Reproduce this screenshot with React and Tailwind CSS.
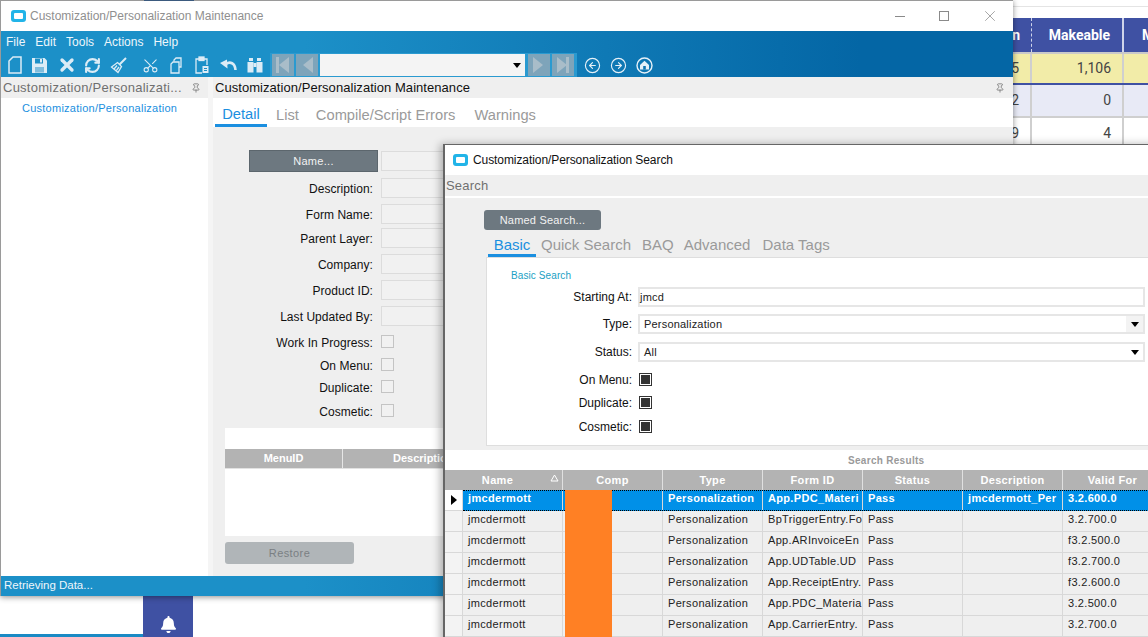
import React from "react";
import { X, RefreshCw, Scissors, CircleArrowLeft, CircleArrowRight, Pin } from "lucide-react";
import { FaBell } from "react-icons/fa";

const AppIcon = () => (
  <div className="w-[15px] h-[12px] rounded-[3px] bg-[#22b4e8] flex items-center justify-center shrink-0">
    <div className="w-[9px] h-[6px] rounded-[1px] bg-white" />
  </div>
);

const NewIcon = () => (
  <svg width="14" height="18" viewBox="0 0 14 18" fill="none" stroke="#dcecf6" strokeWidth="1.5">
    <path d="M5 1h8v16H1V5z" />
  </svg>
);

const SaveIcon = () => (
  <svg width="17" height="17" viewBox="0 0 17 17" fill="#dcecf6">
    <path d="M1 1h12.5L16 3.5V16H1z" />
    <rect x="4" y="1.5" width="8" height="5" fill="#1c8fc7" />
    <rect x="9" y="2" width="2" height="3.5" fill="#dcecf6" />
    <rect x="4" y="10" width="9" height="5.5" fill="#7fbddd" />
  </svg>
);

const BroomIcon = () => (
  <svg width="17" height="17" viewBox="0 0 17 17" fill="none" stroke="#dcecf6" strokeWidth="1.3">
    <path d="M16 1 9.5 7.5" strokeWidth="2" />
    <path d="M7.5 5.5 11.5 9.5 8 15.5 1.5 10z" />
    <path d="M4 12 7 8.5M6.3 13.7 9 10" />
  </svg>
);

const CopyIcon = () => (
  <svg width="14" height="17" viewBox="0 0 14 17" fill="none" stroke="#dcecf6" strokeWidth="1.3">
    <path d="M4 4.5V3l2-2h5v9h-2" />
    <path d="M3 5h6v11H1V7z" />
  </svg>
);

const PasteIcon = () => (
  <svg width="14" height="18" viewBox="0 0 14 18" fill="none" stroke="#dcecf6" strokeWidth="1.3">
    <path d="M4 3H1v14h6" />
    <path d="M9 3h3v6" />
    <rect x="4" y="1" width="5" height="3.5" fill="#dcecf6" />
    <rect x="7.5" y="10" width="6" height="7" fill="#dcecf6" stroke="none" />
    <path d="M9 12.5h3M9 14.5h3" stroke="#1c8fc7" strokeWidth="1" />
  </svg>
);

const UndoIcon = () => (
  <svg width="17" height="13" viewBox="0 0 17 13" fill="none">
    <path d="M6 5c4-3 9-1 9.5 6" stroke="#dcecf6" strokeWidth="2.6" />
    <path d="M0 4l7-3.5.5 9z" fill="#dcecf6" />
  </svg>
);

const BinocularsIcon = () => (
  <svg width="16" height="16" viewBox="0 0 16 16" fill="#dcecf6">
    <rect x="2" y="1" width="4" height="3" />
    <rect x="10" y="1" width="4" height="3" />
    <rect x="0.5" y="5" width="6" height="10.5" />
    <rect x="9.5" y="5" width="6" height="10.5" />
    <rect x="6.5" y="6" width="3" height="4" />
  </svg>
);

const HomeCircle = () => (
  <svg width="17" height="17" viewBox="0 0 17 17" fill="none">
    <circle cx="8.5" cy="8.5" r="7.5" stroke="#e6f1f8" strokeWidth="1.4" />
    <path d="M8.5 3.8 13 8v4.6H4V8z" fill="#e6f1f8" />
    <rect x="7.2" y="9" width="2.6" height="3.6" fill="#0e74b1" />
  </svg>
);

const SkipGlyph = ({ dir, bar }) => (
  <svg width="14" height="16" viewBox="0 0 14 16" fill="#a9bdc9">
    {dir === "left" ? <path d="M13 0v16L3 8z" /> : <path d="M1 0v16l10-8z" />}
    {bar && <rect x={dir === "left" ? 0 : 10} y="0" width="3" height="16" />}
  </svg>
);

const NavBtn = ({ dir, bar, className }) => (
  <div className={`w-[22px] h-[22px] bg-[#7ea4ba] flex items-center justify-center ${className || ""}`}>
    <SkipGlyph dir={dir} bar={bar} />
  </div>
);

const Toolbar = () => (
  <div className="h-[24px] flex items-center">
    <div className="flex items-center w-[269px] pl-[7px]">
      <NewIcon />
      <div className="ml-[9px]"><SaveIcon /></div>
      <X size={20} strokeWidth={4} className="text-[#dcecf6] ml-[9px]" />
      <RefreshCw size={17} strokeWidth={3} className="text-[#dcecf6] ml-[7px]" />
      <div className="ml-[9px]"><BroomIcon /></div>
      <Scissors size={17} strokeWidth={1.5} className="text-[#dcecf6] -rotate-90 ml-[15px]" />
      <div className="ml-[11px]"><CopyIcon /></div>
      <div className="ml-[11px]"><PasteIcon /></div>
      <div className="ml-[11px]"><UndoIcon /></div>
      <div className="ml-[10px]"><BinocularsIcon /></div>
    </div>
    <div className="h-[24px] w-[307px] bg-[#2a9ad0] flex items-center pl-[2px]">
      <NavBtn dir="left" bar />
      <NavBtn dir="left" className="ml-[2px]" />
      <div className="ml-[2px] w-[205px] h-[22px] bg-[#f4f4f4] flex items-center justify-end pr-[4px]">
        <div className="w-0 h-0 border-l-[4px] border-r-[4px] border-t-[5px] border-l-transparent border-r-transparent border-t-black" />
      </div>
      <NavBtn dir="right" className="ml-[3px]" />
      <NavBtn dir="right" bar className="ml-[2px]" />
    </div>
    <div className="flex items-center gap-[9px] ml-[7px] text-[#e6f1f8]">
      <CircleArrowLeft size={17} strokeWidth={1.6} />
      <CircleArrowRight size={17} strokeWidth={1.6} />
      <HomeCircle />
    </div>
  </div>
);

const formRows = [
  ["Description:", "mt-[6px]"],
  ["Form Name:", "mt-[6px]"],
  ["Parent Layer:", "mt-[4px]"],
  ["Company:", "mt-[6px]"],
  ["Product ID:", "mt-[6px]"],
  ["Last Updated By:", "mt-[6px]"],
];

const checkRows = [
  ["Work In Progress:", "mt-[9px]"],
  ["On Menu:", "mt-[10px]"],
  ["Duplicate:", "mt-[9px]"],
  ["Cosmetic:", "mt-[11px]"],
];

const DetailForm = () => (
  <div className="flex-1 min-h-0 bg-[#efefef] flex flex-col pl-[36px] pt-[23px]">
    <div className="flex items-center">
      <div className="w-[129px] h-[22px] bg-[#6d7880] border border-[#5c666d] text-[#f2f2f2] text-[11px] tracking-[0.3px] flex items-center justify-center">
        Name...
      </div>
      <div className="ml-[3px] w-[300px] h-[20px] border border-[#dcdcdc] bg-[#f1f1f1]" />
    </div>
    {formRows.map(([label, gap]) => (
      <div key={label} className={`flex items-center h-[20px] ${gap}`}>
        <div className="w-[124px] pt-[2px] text-right text-[12px] tracking-[0.05px] text-[#111]">{label}</div>
        <div className="ml-[8px] w-[300px] h-[20px] border border-[#dcdcdc] bg-[#f1f1f1]" />
      </div>
    ))}
    {checkRows.map(([label, gap]) => (
      <div key={label} className={`flex items-center h-[13px] ${gap}`}>
        <div className="w-[124px] pt-[2px] text-right text-[12px] tracking-[0.05px] text-[#111]">{label}</div>
        <div className="ml-[8px] w-[13px] h-[13px] border border-[#c4c4c4] bg-[#f1f1f1]" />
      </div>
    ))}
    <div className="mt-[11px] -ml-[24px] w-[300px] h-[108px] bg-white flex flex-col">
      <div className="mt-[21px] h-[19px] bg-[#b3b3b3] flex text-white font-bold text-[11px] border-b border-[#e2e2e2] box-content">
        <div className="w-[118px] flex items-center justify-center border-r border-[#e6e6e6]">MenuID</div>
        <div className="flex-1 flex items-center pl-[50px] whitespace-nowrap overflow-hidden">Description</div>
      </div>
    </div>
    <div className="mt-[6px] -ml-[24px] w-[129px] h-[22px] rounded-[3px] bg-[#b0b5b8] text-[#7a7f83] text-[11px] tracking-[0.4px] flex items-center justify-center">
      Restore
    </div>
  </div>
);

const MainWindow = () => (
  <div className="absolute left-0 top-0 w-[1013px] h-[596px] bg-white border-l border-t border-[#9a9a9a] shadow-[0_1px_6px_rgba(0,0,0,0.45)] flex flex-col">
    <div className="absolute left-[143px] -top-px w-[50px] h-px bg-[#3b5a7e]" />
    <div className="h-[30px] flex items-center pl-[10px] shrink-0">
      <AppIcon />
      <span className="ml-[4px] text-[12px] text-[#8f8f8f]">Customization/Personalization Maintenance</span>
      <div className="ml-auto flex items-center text-[#8a8a8a]">
        <div className="w-[10px] h-px bg-[#8a8a8a] mr-[34px]" />
        <div className="w-[10px] h-[10px] border border-[#8a8a8a] mr-[32px]" />
        <X size={18} strokeWidth={1} className="mr-[14px]" />
      </div>
    </div>
    <div className="h-[46px] shrink-0 bg-gradient-to-r from-[#1c90c8] from-30% to-[#0466a5] to-85%">
      <div className="h-[22px] flex items-center pl-[5px] gap-[10px] text-[12px] text-[#eef6fb]">
        <span>File</span>
        <span>Edit</span>
        <span>Tools</span>
        <span>Actions</span>
        <span>Help</span>
      </div>
      <Toolbar />
    </div>
    <div className="flex-1 min-h-0 flex">
      <div className="w-[207px] bg-white flex flex-col shrink-0">
        <div className="h-[21px] bg-[#efefef] flex items-center pl-[2px] text-[13px] tracking-[0.25px] text-[#6f6f6f]">
          <span>Customization/Personalizati...</span>
          <Pin size={10} className="ml-[9px] text-[#777]" />
        </div>
        <div className="pl-[21px] pt-[2px] text-[11px] tracking-[0.25px] text-[#1b8fe0]">Customization/Personalization</div>
      </div>
      <div className="w-[5px] bg-[#f5f5f5] shrink-0" />
      <div className="flex-1 min-w-0 flex flex-col">
        <div className="h-[21px] bg-[#efefef] flex items-center justify-between pl-[2px] pr-[8px] text-[13px] tracking-[0.05px] text-[#111]">
          <span>Customization/Personalization Maintenance</span>
          <Pin size={10} className="text-[#777]" />
        </div>
        <div className="h-[29px] bg-white flex items-end pl-[2px] text-[14.7px] text-[#9a9a9a] shrink-0">
          <div className="w-[52px] h-[29px] pt-[6px] flex items-center justify-center text-[#1b8fe0] border-b-[3px] border-[#1b8fe0]">Detail</div>
          <div className="h-[29px] flex items-center ml-[9px] pt-[5px]">List</div>
          <div className="h-[29px] flex items-center ml-[17px] pt-[5px]">Compile/Script Errors</div>
          <div className="h-[29px] flex items-center ml-[19px] pt-[5px]">Warnings</div>
        </div>
        <DetailForm />
      </div>
    </div>
    <div className="h-[20px] shrink-0 bg-gradient-to-r from-[#1c90c8] from-30% to-[#0466a5] to-85% flex items-center pl-[3px] text-[11.5px] text-[#eef6fb]">
      Retrieving Data...
    </div>
  </div>
);

const results = [
  ["jmcdermott", "Personalization", "App.PDC_Materi", "Pass", "jmcdermott_Per", "3.2.600.0"],
  ["jmcdermott", "Personalization", "BpTriggerEntry.Fo", "Pass", "", "3.2.700.0"],
  ["jmcdermott", "Personalization", "App.ARInvoiceEn", "Pass", "", "f3.2.500.0"],
  ["jmcdermott", "Personalization", "App.UDTable.UD", "Pass", "", "f3.2.700.0"],
  ["jmcdermott", "Personalization", "App.ReceiptEntry.", "Pass", "", "f3.2.600.0"],
  ["jmcdermott", "Personalization", "App.PDC_Materia", "Pass", "", "3.2.500.0"],
  ["jmcdermott", "Personalization", "App.CarrierEntry.", "Pass", "", "3.2.700.0"],
];

const headCols = ["Name", "Comp", "Type", "Form ID", "Status", "Description", "Valid For"];

const ResultRow = ({ row, selected }) => {
  const cell = "w-[100px] shrink-0 pl-[5px] pb-[4px] border-r border-[#d8d8d8] overflow-hidden whitespace-nowrap flex items-center";
  const cells = [row[0], "", row[1], row[2], row[3], row[4], row[5]];
  return (
    <div className={`flex h-[21px] text-[11px] tracking-[0.33px] ${selected ? "bg-[#0090e8] text-white font-bold" : "bg-[#efefef] text-[#222]"}`}>
      <div className={`w-[18px] shrink-0 flex items-center justify-center border-r border-b border-[#d8d8d8] ${selected ? "bg-white" : "bg-[#f3f3f3]"}`}>
        {selected && <div className="w-0 h-0 border-t-[5px] border-b-[5px] border-l-[6px] border-t-transparent border-b-transparent border-l-black" />}
      </div>
      <div className={`flex flex-1 ${selected ? "border-y border-dotted border-black" : "border-b border-[#d8d8d8]"}`}>
        {cells.map((c, i) => (
          <div key={i} className={cell}>{c}</div>
        ))}
      </div>
    </div>
  );
};

const SearchField = ({ label, value, select, button, mt }) => (
  <div className={`flex items-center h-[20px] ${mt}`}>
    <div className="w-[151px] text-right text-[12px] text-[#111] pr-[6px]">{label}</div>
    <div className={`w-[507px] h-[20px] border-2 border-[#e6e6e6] flex items-center text-[11px] tracking-[0.2px] text-[#222] ${select ? "pl-[4px]" : "pl-0"}`}>
      <span>{value}</span>
      {select && (
        <div className={`ml-auto h-full w-[17px] flex items-center justify-center ${button ? "bg-[#f3f3f3]" : ""}`}>
          <div className="w-0 h-0 border-l-[4px] border-r-[4px] border-t-[5px] border-l-transparent border-r-transparent border-t-black" />
        </div>
      )}
    </div>
  </div>
);

const SearchCheck = ({ label, mt }) => (
  <div className={`flex items-center h-[13px] ${mt}`}>
    <div className="w-[151px] text-right text-[12px] text-[#111] pr-[6px]">{label}</div>
    <div className="ml-px w-[13px] h-[13px] border border-[#333] flex items-center justify-center">
      <div className="w-[9px] h-[9px] bg-[#333]" />
    </div>
  </div>
);

const SearchWindow = () => (
  <div className="absolute left-[443px] top-[144px] w-[720px] h-[510px] bg-white border-l-2 border-t border-[#666] shadow-[-3px_0_8px_rgba(0,0,0,0.28)] flex flex-col">
    <div className="h-[30px] shrink-0 flex items-center pl-[8px]">
      <AppIcon />
      <span className="ml-[5px] text-[12px] tracking-[-0.08px] text-[#111]">Customization/Personalization Search</span>
    </div>
    <div className="h-[21px] shrink-0 bg-[#efefef] flex items-center pl-[1px] text-[13px] tracking-[0.2px] text-[#6f6f6f]">Search</div>
    <div className="h-[2px] shrink-0 bg-white" />
    <div className="h-[252px] shrink-0 bg-[#efefef] pt-[12px]">
      <div className="ml-[39px] w-[117px] h-[20px] rounded-[3px] bg-[#6d7880] text-[#f2f2f2] text-[11px] tracking-[0.2px] flex items-center justify-center">
        Named Search...
      </div>
      <div className="h-[21px] mt-[6px] ml-[43px] flex items-center text-[15px] text-[#9a9a9a]">
        <div className="w-[48px] h-[21px] flex items-center justify-center text-[#1b8fe0] border-b-[3px] border-[#1b8fe0]">Basic</div>
        <div className="ml-[5px] pb-[3px]">Quick Search</div>
        <div className="ml-[11px] pb-[3px]">BAQ</div>
        <div className="ml-[10px] pb-[3px]">Advanced</div>
        <div className="ml-[12px] pb-[3px]">Data Tags</div>
      </div>
      <div className="ml-[41px] h-[189px] bg-white border-l border-t border-b border-[#dedede] flex flex-col">
        <div className="pl-[24px] pt-[10px] text-[10px] tracking-[0.1px] text-[#1a9fc4] h-[28px]">Basic Search</div>
        <SearchField label="Starting At:" value="jmcd" mt="mt-[1px]" />
        <SearchField label="Type:" value="Personalization" select button mt="mt-[7px]" />
        <SearchField label="Status:" value="All" select mt="mt-[8px]" />
        <SearchCheck label="On Menu:" mt="mt-[11px]" />
        <SearchCheck label="Duplicate:" mt="mt-[10px]" />
        <SearchCheck label="Cosmetic:" mt="mt-[11px]" />
      </div>
    </div>
    <div className="h-[20px] shrink-0 bg-white flex items-center pl-[403px] text-[10px] font-bold tracking-[0.3px] text-[#9a9a9a]">Search Results</div>
    <div className="relative flex-1 min-h-0 bg-white">
      <div className="flex h-[20px] bg-[#b3b3b3] text-white text-[11px] font-bold tracking-[0.33px]">
        <div className="w-[18px] shrink-0" />
        {headCols.map((h) => (
          <div key={h} className={`relative w-[100px] shrink-0 flex items-center justify-center border-r border-[#e0e0e0] ${h === "Name" ? "pr-[30px]" : ""}`}>
            {h}
            {h === "Name" && (
              <svg width="9" height="8" viewBox="0 0 9 8" className="absolute right-[3px] top-[4px]" fill="none" stroke="#fff">
                <path d="M4.5 1 8 7H1z" />
              </svg>
            )}
          </div>
        ))}
      </div>
      {results.map((row, i) => (
        <ResultRow key={i} row={row} selected={i === 0} />
      ))}
      {/* company column is painted over in the screenshot */}
      <div className="absolute left-[120px] top-[20px] w-[47px] h-[200px] bg-[#ff8024]" />
    </div>
  </div>
);

const BackTable = () => (
  <div className="absolute left-[1013px] top-[18px] w-[135px] overflow-hidden text-[14px] font-['Roboto','Liberation_Sans',sans-serif]">
    <div className="flex h-[36px] bg-[#3f51a3] text-white font-bold border-b-2 border-[#c9c9c9]">
      <div className="w-[19px] shrink-0 flex items-center justify-end pr-[11px] border-r border-dashed border-[#cfd4ea]">n</div>
      <div className="w-[92px] shrink-0 flex items-center justify-center border-r-2 border-[#cfd4ea] pl-[5px]">Makeable</div>
      <div className="shrink-0 flex items-center pl-[18px]">M</div>
    </div>
    <div className="flex h-[31px] bg-[#f2eca8] text-[#444] border-b-2 border-[#3f51a3]">
      <div className="w-[19px] flex items-center justify-end pr-[11px] border-r-2 border-[#cfcfcf]">5</div>
      <div className="w-[92px] flex items-center justify-end pr-[11px] border-r-2 border-[#cfcfcf]">1,106</div>
    </div>
    <div className="flex h-[33px] bg-[#e8eaf6] text-[#444] border-b-2 border-[#cfcfcf]">
      <div className="w-[19px] flex items-center justify-end pr-[11px] border-r-2 border-[#cfcfcf]">2</div>
      <div className="w-[92px] flex items-center justify-end pr-[11px] border-r-2 border-[#cfcfcf]">0</div>
    </div>
    <div className="flex h-[30px] bg-white text-[#444]">
      <div className="w-[19px] flex items-center justify-end pr-[11px] border-r-2 border-[#cfcfcf]">9</div>
      <div className="w-[92px] flex items-center justify-end pr-[11px] border-r-2 border-[#cfcfcf]">4</div>
    </div>
  </div>
);

export default function App() {
  return (
    <div className="relative w-[1148px] h-[637px] overflow-hidden bg-white font-['Liberation_Sans',Arial,sans-serif]">
      <div className="absolute left-[1013px] top-[6px] w-[135px] h-px bg-[#e4e4e4]" />
      <BackTable />
      <div className="absolute left-[143px] top-[596px] w-[50px] h-[41px] bg-[#3f51a3] flex items-center justify-center text-white pt-[16px]">
        <FaBell size={17} />
      </div>
      <div className="absolute left-0 top-[634px] w-[143px] h-[3px] bg-[#1a8ac4]" />
      <MainWindow />
      <SearchWindow />
    </div>
  );
}
